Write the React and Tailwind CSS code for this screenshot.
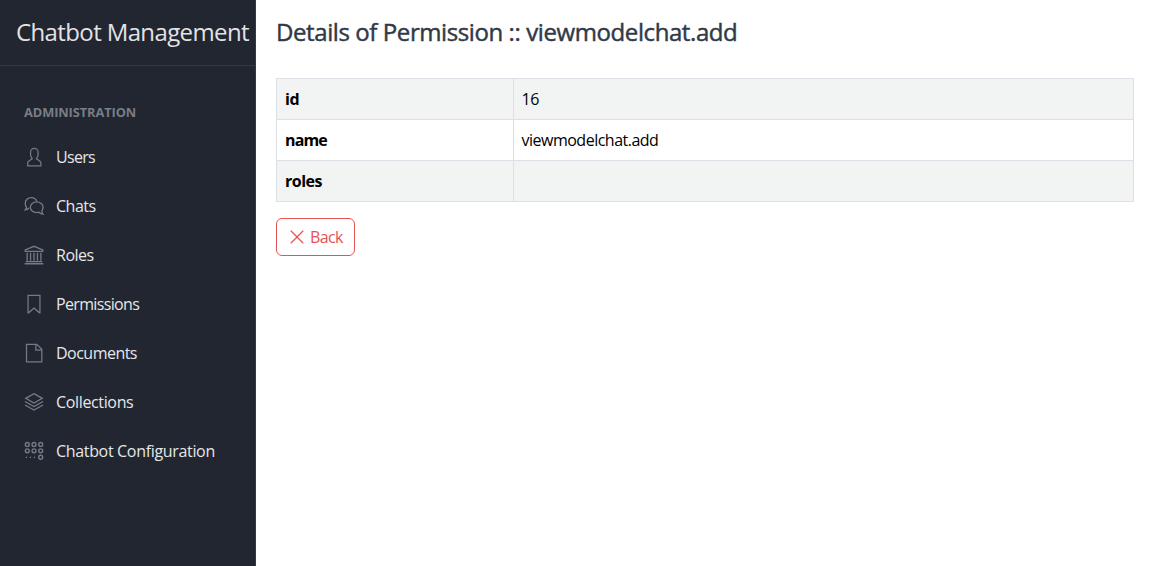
const icons = {
  user: (
    <path d="M411.6,343.656l-72.823-47.334,27.455-50.334A80.23,80.23,0,0,0,376,207.681V128a112,112,0,0,0-224,0v79.681a80.236,80.236,0,0,0,9.768,38.308l27.455,50.333L116.4,343.656A79.725,79.725,0,0,0,80,410.732V496H448V410.732A79.727,79.727,0,0,0,411.6,343.656ZM416,464H112V410.732a47.836,47.836,0,0,1,21.841-40.246l97.66-63.479-41.64-76.341A48.146,48.146,0,0,1,184,207.681V128a80,80,0,0,1,160,0v79.681a48.146,48.146,0,0,1-5.861,22.985L296.5,307.007l97.662,63.479A47.836,47.836,0,0,1,416,410.732Z" />
  ),
  chat: (
    <g fill="none" stroke="currentColor" strokeWidth="34">
      <path d="M126 308C104 336 72 351 34 353C58 326 64 306 62 282C42 256 32 226 32 190C32 104 98 42 184 42C250 42 304 76 326 132" />
      <path d="M324 150C234 150 162 210 162 288C162 366 234 424 324 424C344 424 364 421 382 415C408 446 442 463 484 465C464 440 456 414 456 384C476 358 488 326 488 288C488 210 414 150 324 150Z" />
    </g>
  ),
  institution: (
    <g fill="none" stroke="currentColor" strokeWidth="34">
      <path d="M32 164V126L256 34L480 126V164Z" />
      <path d="M80 200V400M168 200V400M256 200V400M344 200V400M432 200V400" />
      <path d="M44 424H468M16 480H496" />
    </g>
  ),
  bookmark: (
    <path d="M424,496H388.75L256.008,381.19,123.467,496H88V16H424ZM120,48V456.667l135.992-117.8L392,456.5V48Z" />
  ),
  file: (
    <path fillRule="evenodd" d="M334.627,16H48V496H472V153.373ZM440,166.627V168H320V48h1.373ZM80,464V48H288V200H440V464Z" />
  ),
  layers: (
    <g fill="none" stroke="currentColor" strokeWidth="34">
      <path d="M256 42L468 162L256 282L44 162Z" />
      <path d="M24 244L256 374L488 244" />
      <path d="M24 332L256 462L488 332" />
    </g>
  ),
  keypad: (
    <g>
      <g fill="none" stroke="currentColor" strokeWidth="36">
        <circle cx="84" cy="88" r="50" />
        <circle cx="256" cy="88" r="50" />
        <circle cx="428" cy="88" r="50" />
        <circle cx="84" cy="252" r="50" />
        <circle cx="256" cy="252" r="50" />
        <circle cx="428" cy="252" r="50" />
        <circle cx="428" cy="416" r="50" />
      </g>
      <path d="M44 400h36v36h-36zM146 400h36v36h-36zM248 400h36v36h-36z" />
    </g>
  ),
  x: (
    <path d="M427.314 107.313L404.686 84.687L256 233.373L107.314 84.687L84.686 107.313L233.373 256L84.686 404.687L107.314 427.313L256 278.627L404.686 427.313L427.314 404.687L278.627 256Z" />
  ),
};

function Icon({ name, className }) {
  return (
    <svg viewBox="0 0 512 512" fill="currentColor" className={className} aria-hidden="true">
      {icons[name]}
    </svg>
  );
}

const navItems = [
  { icon: "user", label: "Users", spacing: "tracking-[-0.7px]" },
  { icon: "chat", label: "Chats", spacing: "tracking-[-0.5px]" },
  { icon: "institution", label: "Roles", spacing: "tracking-[-0.5px]" },
  { icon: "bookmark", label: "Permissions", spacing: "tracking-[-0.66px]" },
  { icon: "file", label: "Documents", spacing: "tracking-[-0.52px]" },
  { icon: "layers", label: "Collections", spacing: "tracking-[-0.35px]" },
  { icon: "keypad", label: "Chatbot Configuration", spacing: "tracking-[-0.33px]" },
];

function Sidebar() {
  return (
    <aside className="flex w-64 shrink-0 flex-col border-r border-[#323a49] bg-[#212631]">
      <div className="flex h-[66px] items-center whitespace-nowrap border-b border-[#323a49] pb-px pl-4 text-2xl tracking-[-0.62px] text-[#e2e3e4]">
        Chatbot Management
      </div>
      <nav className="flex flex-col pt-[35px]">
        <h2 className="mb-[7px] flex h-6 items-center pl-6 text-[12.8px] font-bold tracking-[-0.08px] text-[#7a7d83]">
          ADMINISTRATION
        </h2>
        {navItems.map((item) => (
          <a key={item.label} href="#" className="flex h-[49px] items-center gap-3 whitespace-nowrap pl-6 text-base text-[#e6e7e8]">
            <Icon name={item.icon} className="size-5 shrink-0 text-[#757a87]" />
            <span className={item.spacing}>{item.label}</span>
          </a>
        ))}
      </nav>
    </aside>
  );
}

const rows = [
  { key: "id", value: "16", spacing: "tracking-[-0.3px]" },
  { key: "name", value: "viewmodelchat.add", spacing: "tracking-[-0.85px]" },
  { key: "roles", value: "", spacing: "tracking-[-0.5px]" },
];

export default function App() {
  return (
    <div className="flex h-screen overflow-hidden bg-white font-['Open_Sans','Noto_Sans',sans-serif]">
      <Sidebar />
      <main className="flex grow flex-col items-start pl-5 pr-[17px] pt-3.5">
        <h1 className="flex h-9 items-center text-2xl font-medium tracking-[-0.41px] text-[#303a46] [-webkit-text-stroke:0.45px_#303a46]">
          <span>Details of Permission :: viewmodelchat.add</span>
        </h1>
        <table className="mt-7 w-full table-fixed border-collapse text-base text-black">
          <colgroup>
            <col className="w-[237px]" />
            <col />
          </colgroup>
          <tbody>
            {rows.map((row) => (
              <tr key={row.key} className="h-[41px] odd:bg-[#f2f4f3]">
                <th className="border border-[#dbdfe6] px-2 py-0 text-left font-bold">
                  <span className={row.spacing}>{row.key}</span>
                </th>
                <td className="border border-[#dbdfe6] px-[7.5px] py-0 tracking-[-0.5px]">{row.value}</td>
              </tr>
            ))}
          </tbody>
        </table>
        <button className="mt-4 flex h-[38px] w-[79px] items-center gap-[3px] rounded-md border border-[#e55353] pl-2.5 text-base text-[#e55353]">
          <Icon name="x" className="size-5 shrink-0" />
          <span className="tracking-[-0.6px]">Back</span>
        </button>
      </main>
    </div>
  );
}
